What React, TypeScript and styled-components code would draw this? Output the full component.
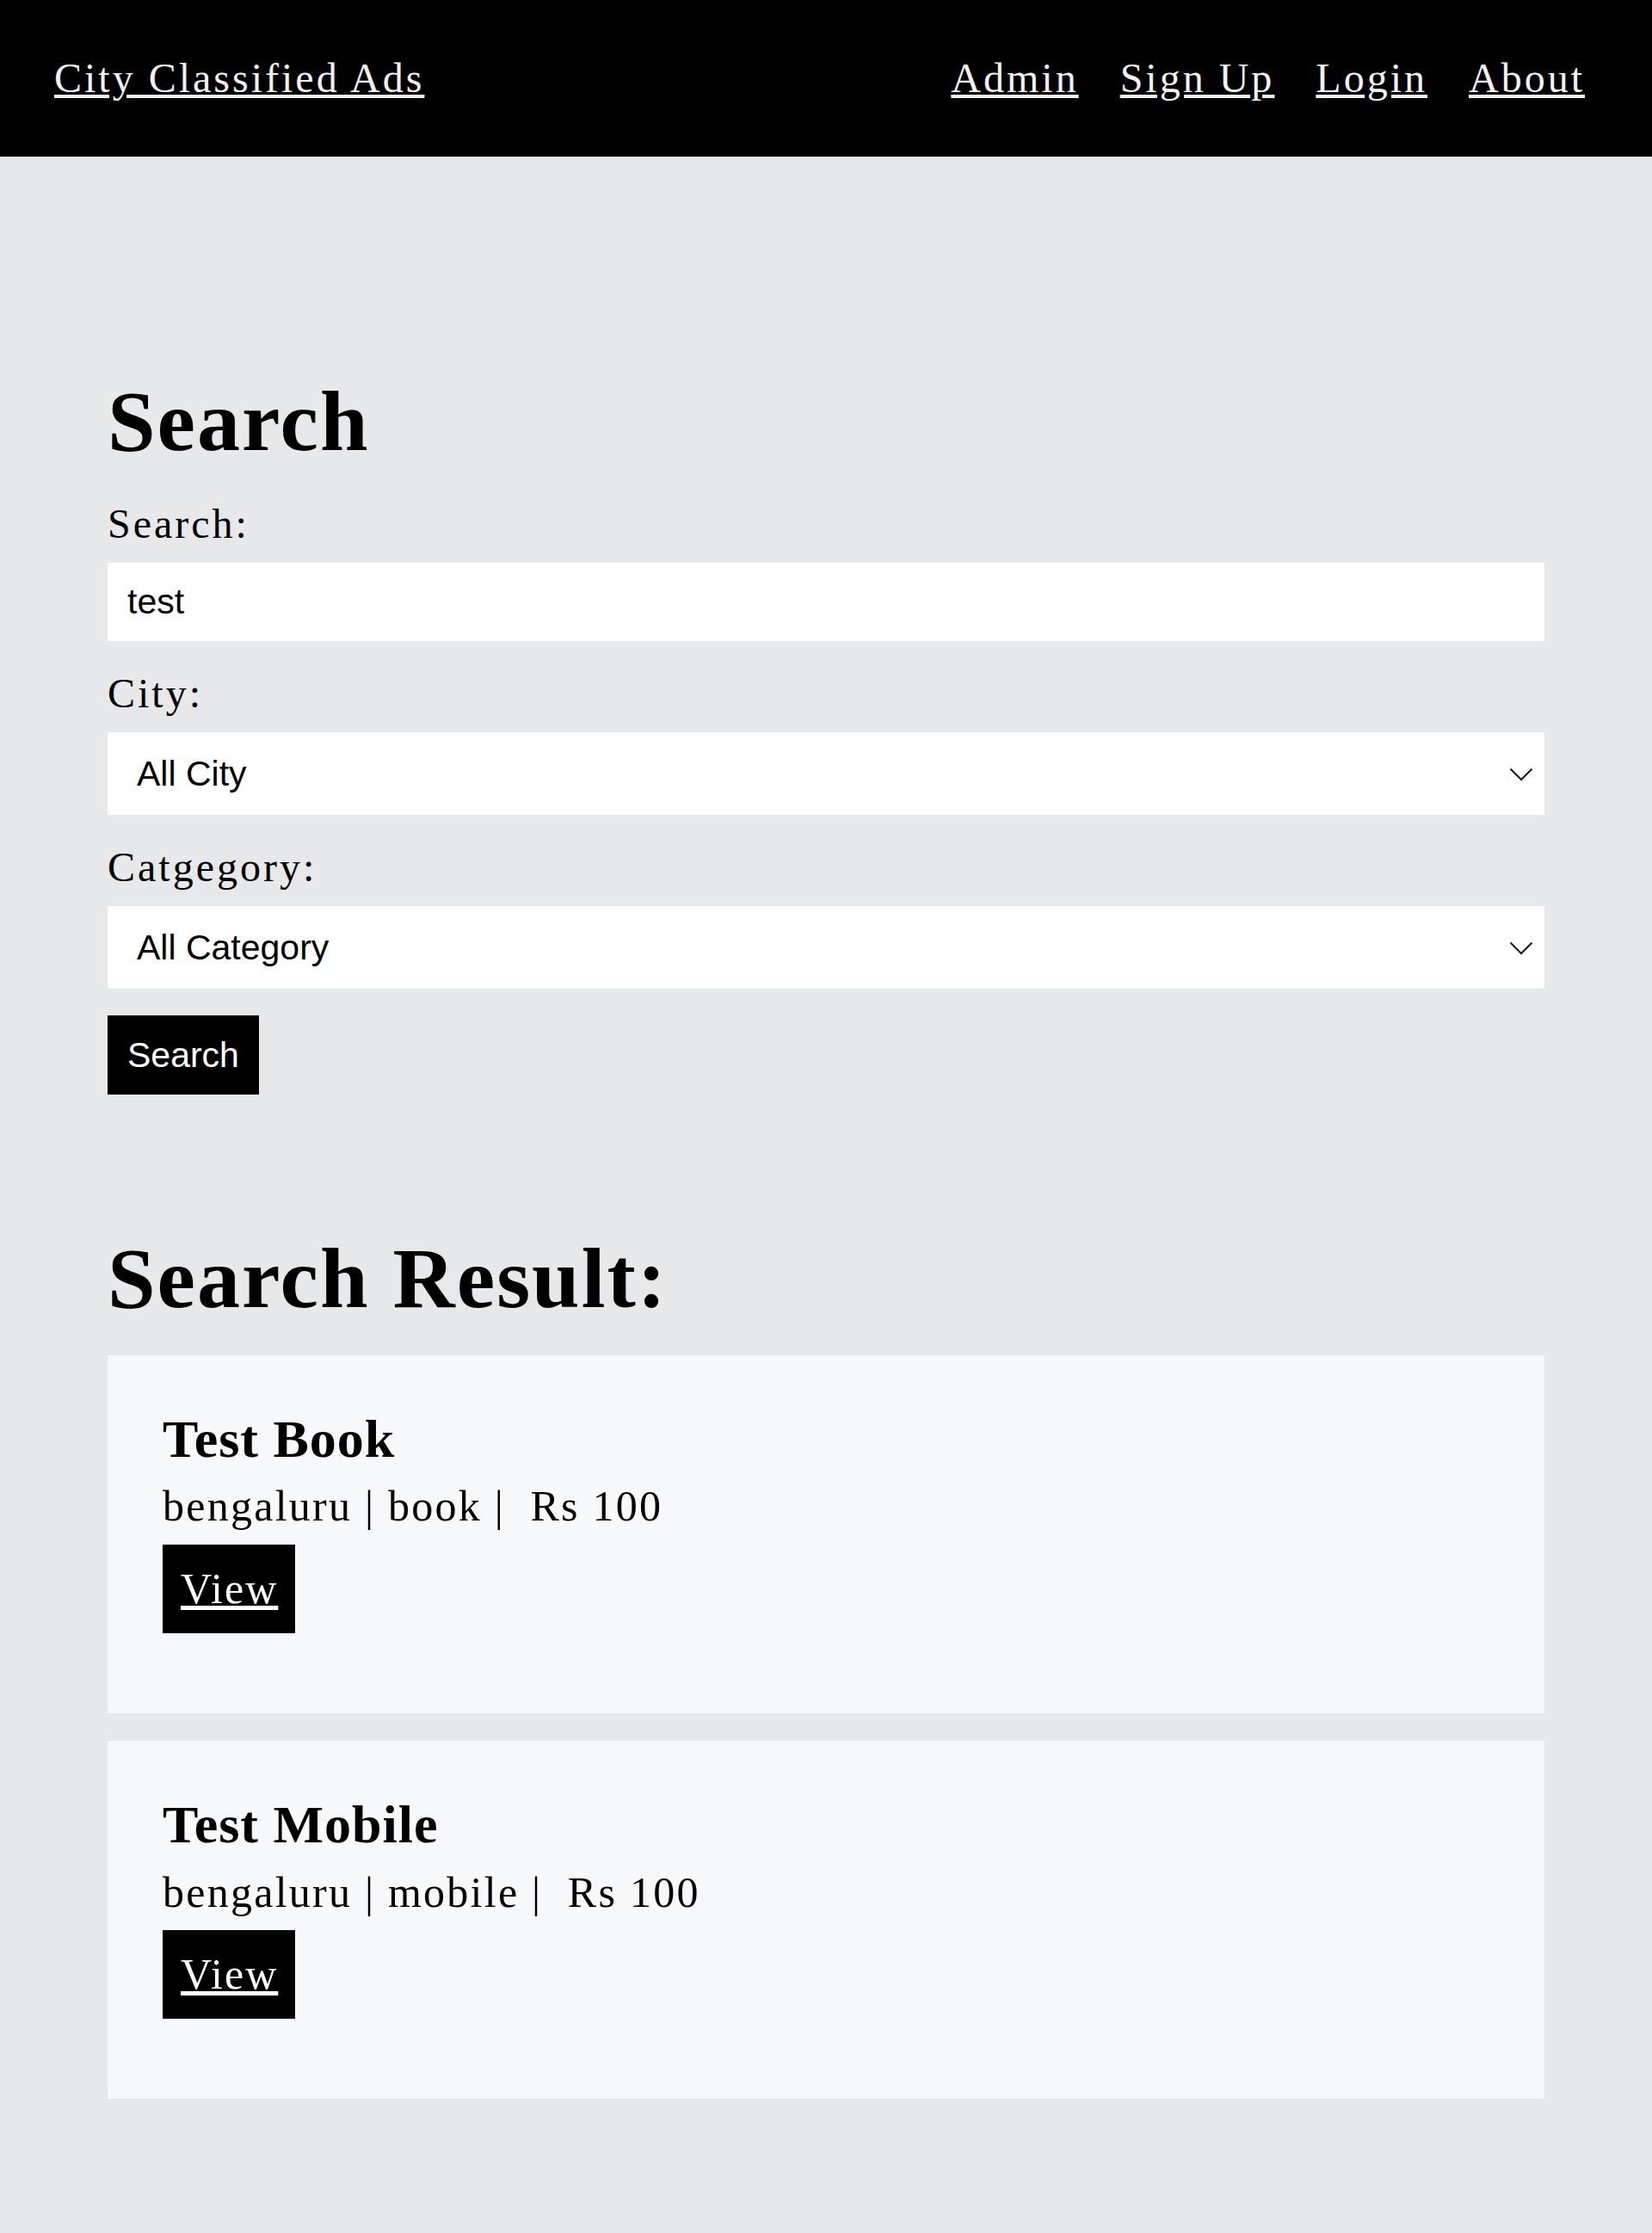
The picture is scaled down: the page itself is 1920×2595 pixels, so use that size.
import { styled, createGlobalStyle } from "styled-components";

type Ad = {
  title: string;
  city: string;
  category: string;
  price: number;
};

const ads: Ad[] = [
  { title: "Test Book", city: "bengaluru", category: "book", price: 100 },
  { title: "Test Mobile", city: "bengaluru", category: "mobile", price: 100 },
];

const GlobalStyle = createGlobalStyle`
  body {
    margin: 0;
    background: #e7e8ea;
    font-family: "Liberation Serif", "Times New Roman", serif;
    line-height: 1.107;
    color: #000;
  }
`;

const Chevron = () => (
  <ChevronIcon width="28" height="16" viewBox="0 0 28 16">
    <polyline points="1.5,1.5 14,14 26.5,1.5" fill="none" stroke="#1a1a1a" strokeWidth="2" />
  </ChevronIcon>
);

const App = () => {
  return (
    <>
      <GlobalStyle />
      <Header>
        <Brand href="#">City Classified Ads</Brand>
        <Nav>
          <NavLink href="#">Admin</NavLink>
          <NavLink href="#">Sign Up</NavLink>
          <NavLink href="#">Login</NavLink>
          <NavLink href="#">About</NavLink>
        </Nav>
      </Header>
      <Main>
        <Title>Search</Title>
        <Form onSubmit={(e) => e.preventDefault()}>
          <Label htmlFor="q">Search:</Label>
          <TextInput id="q" type="text" defaultValue="test" />
          <Label htmlFor="city">City:</Label>
          <SelectBox>
            <Select id="city" defaultValue="all">
              <option value="all">All City</option>
              <option value="bengaluru">bengaluru</option>
            </Select>
            <Chevron />
          </SelectBox>
          <Label htmlFor="cat">Catgegory:</Label>
          <SelectBox>
            <Select id="cat" defaultValue="all">
              <option value="all">All Category</option>
              <option value="book">book</option>
              <option value="mobile">mobile</option>
            </Select>
            <Chevron />
          </SelectBox>
          <SearchBtn type="submit">Search</SearchBtn>
        </Form>

        <ResultTitle>Search Result:</ResultTitle>
        <ResultList>
          {ads.map((ad) => (
            <Card key={ad.title}>
              <CardTitle>{ad.title}</CardTitle>
              <CardMeta>
                {ad.city} | {ad.category} | {"\u00a0"}Rs {ad.price}
              </CardMeta>
              <ViewBtn href="#">View</ViewBtn>
            </Card>
          ))}
        </ResultList>
      </Main>
    </>
  );
};
export default App;

const Header = styled.header`
  height: 182px;
  background: #000;
  display: flex;
  align-items: center;
  justify-content: space-between;
  padding: 0 78px 0 63px;
  box-sizing: border-box;
`;

const Brand = styled.a`
  color: #f1f1f1;
  font-size: 48px;
  letter-spacing: 3px;
  text-decoration: underline;
`;

const Nav = styled.nav`
  display: flex;
  gap: 48px;
`;

const NavLink = styled.a`
  color: #f1f1f1;
  font-size: 48px;
  letter-spacing: 3px;
  text-decoration: underline;
`;

const Main = styled.main`
  width: 1670px;
  margin: 0 auto;
  padding: 253px 0 158px;
`;

const Title = styled.h1`
  margin: 0;
  font-size: 100px;
  font-weight: bold;
  letter-spacing: 2px;
`;

const ResultTitle = styled(Title)`
  margin-top: 159px;
`;

const Form = styled.form`
  display: flex;
  flex-direction: column;
  align-items: flex-start;
`;

const Label = styled.label`
  display: block;
  font-size: 48px;
  letter-spacing: 3px;
  margin-top: 34px;
  margin-bottom: 19px;

  &:first-child {
    margin-top: 36px;
  }
`;

const TextInput = styled.input`
  width: 100%;
  height: 91px;
  box-sizing: border-box;
  border: none;
  outline: none;
  background: #fff;
  padding: 0 23px;
  font-family: "Liberation Sans", Arial, sans-serif;
  font-size: 41px;
  color: #000;
`;

const SelectBox = styled.div`
  position: relative;
  width: 100%;
`;

const Select = styled.select`
  display: block;
  width: 100%;
  height: 96px;
  box-sizing: border-box;
  border: none;
  outline: none;
  background: #fff;
  padding: 0 0 0 34px;
  font-family: "Liberation Sans", Arial, sans-serif;
  font-size: 41px;
  color: #000;
  appearance: none;
  -webkit-appearance: none;
  border-radius: 0;
`;

const ChevronIcon = styled.svg`
  position: absolute;
  right: 13px;
  top: 41px;
  pointer-events: none;
`;

const SearchBtn = styled.button`
  margin-top: 31px;
  height: 92px;
  padding: 0 23px;
  border: none;
  background: #000;
  color: #fff;
  font-family: "Liberation Sans", Arial, sans-serif;
  font-size: 41px;
  cursor: pointer;
`;

const ResultList = styled.div`
  display: flex;
  flex-direction: column;
  gap: 32px;
  margin-top: 33px;
`;

const Card = styled.div`
  background: #f7f8fa;
  padding: 63px 64px 93px;
  display: flex;
  flex-direction: column;
  align-items: flex-start;
`;

const CardTitle = styled.h3`
  margin: 0;
  font-size: 62px;
  font-weight: bold;
  letter-spacing: 1px;
`;

const CardMeta = styled.p`
  margin: 17px 0 0;
  font-size: 50px;
  letter-spacing: 2.25px;
`;

const ViewBtn = styled.a`
  margin-top: 16px;
  display: inline-block;
  background: #000;
  color: #fff;
  font-size: 50px;
  letter-spacing: 2px;
  padding: 24px 20px 24px 21px;
  text-decoration: underline;
`;
